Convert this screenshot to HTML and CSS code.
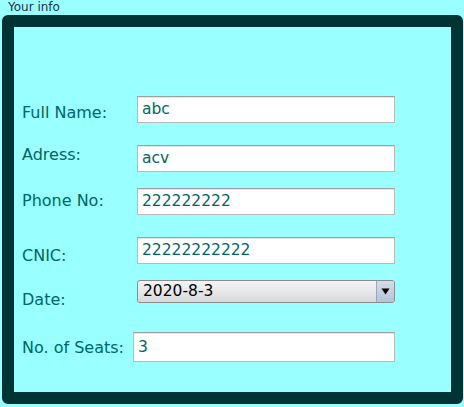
FILE: index.html
```html
<!DOCTYPE html>
<html>
<head>
<meta charset="utf-8">
<link rel="stylesheet" href="styles.css">
</head>
<body>
<div class="page">
  <div class="title">Your info</div>
  <div class="panel">
    <div class="row row-1">
      <div class="label">Full Name:</div>
      <div class="input">abc</div>
    </div>
    <div class="row row-2">
      <div class="label">Adress:</div>
      <div class="input">acv</div>
    </div>
    <div class="row row-3">
      <div class="label">Phone No:</div>
      <div class="input">222222222</div>
    </div>
    <div class="row row-4">
      <div class="label">CNIC:</div>
      <div class="input">22222222222</div>
    </div>
    <div class="row row-5">
      <div class="label">Date:</div>
      <div class="combo">
        <span class="combo-text">2020-8-3</span>
        <span class="combo-btn"><svg width="9" height="7" viewBox="0 0 9 7"><path d="M0.5 0.5 L8.5 0.5 L4.5 6.5 Z" fill="#000"/></svg></span>
      </div>
    </div>
    <div class="row row-6">
      <div class="label">No. of Seats:</div>
      <div class="input tall">3</div>
    </div>
  </div>
</div>
</body>
</html>
```
FILE: styles.css
```css
html, body {
  margin: 0;
  padding: 0;
  background: #99ffff;
}
.page {
  width: 464px;
  height: 407px;
  font-family: "DejaVu Sans", Verdana, sans-serif;
}
.title {
  height: 15px;
  padding-left: 8px;
  font-size: 12px;
  line-height: 15px;
  color: #1c3050;
}
.panel {
  box-sizing: border-box;
  margin-left: 2px;
  width: 461px;
  height: 389px;
  border: 12px solid #003333;
  border-radius: 6px;
  padding: 69px 0 0 8px;
}
.row {
  display: flex;
  align-items: flex-start;
}
.label {
  width: 115px;
  flex: none;
  font-size: 16px;
  line-height: 20px;
  color: #006666;
}
.input {
  box-sizing: border-box;
  width: 258px;
  height: 27px;
  background: #fff;
  border: 1px solid #b8b8b8;
  border-top-color: #a0a0a0;
  box-shadow: inset 0 1px 0 #e4e4e4;
  padding-left: 4px;
  font-size: 15.5px;
  line-height: 25px;
  color: #006666;
}
.input.tall {
  height: 30px;
  line-height: 28px;
  width: 262px;
}
.row-1 .label { padding-top: 7px; }
.row-2 { margin-top: 20px; }
.row-2 .label { padding-top: 2px; }
.row-2 .input { margin-top: 2px; }
.row-3 { margin-top: 16px; }
.row-3 .label { padding-top: 3px; }
.row-4 { margin-top: 22px; }
.row-4 .label { padding-top: 9px; }
.row-5 { margin-top: 14px; }
.row-5 .label { padding-top: 10px; }
.row-6 { margin-top: 22px; }
.row-6 .label { padding-top: 6px; width: 111px; }
.combo {
  box-sizing: border-box;
  width: 258px;
  height: 23px;
  display: flex;
  border: 1px solid #8c8c8c;
  border-radius: 3px;
  background: linear-gradient(#f4f4f4, #e6e7e9 50%, #d8d9dc);
  overflow: hidden;
}
.combo-text {
  flex: 1;
  padding-left: 5px;
  font-size: 15.5px;
  line-height: 21px;
  color: #000;
}
.combo-btn {
  width: 17px;
  flex: none;
  border-left: 1px solid #9aa8b8;
  background: linear-gradient(#d4dee8, #b4c4d6);
  display: flex;
  align-items: center;
  justify-content: center;
}
```
